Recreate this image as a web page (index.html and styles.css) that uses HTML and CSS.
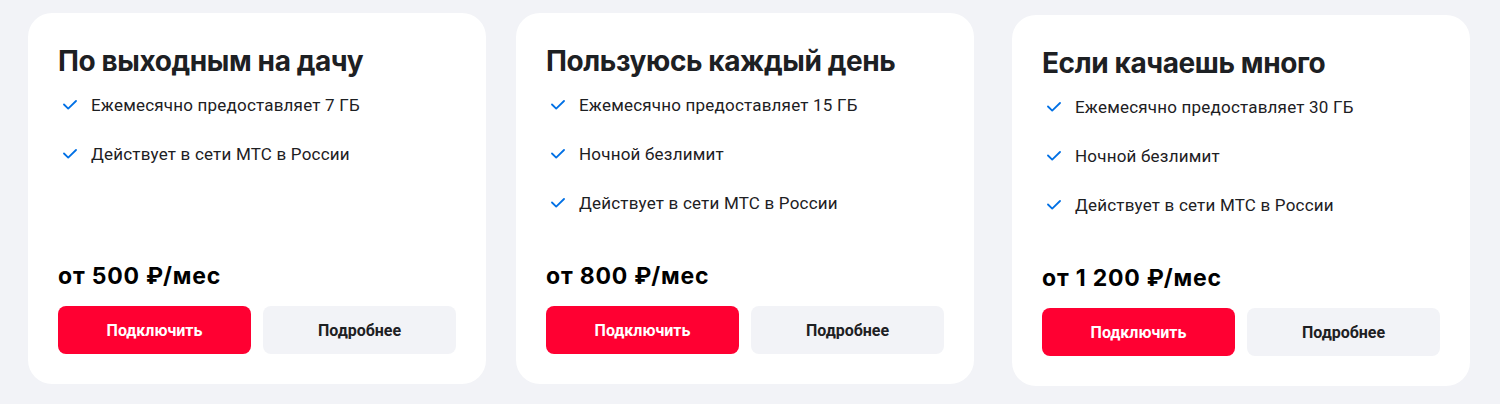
FILE: index.html
```html
<!DOCTYPE html>
<html lang="ru">
<head>
<meta charset="utf-8">
<title>Тарифы</title>
<link rel="stylesheet" href="styles.css">
</head>
<body>
<div class="cards">
  <div class="card">
    <h2 class="card-title">По выходным на дачу</h2>
    <ul class="features">
      <li><span class="check"><svg viewBox="0 0 14 10" width="14" height="10"><polyline points="1,4.5 5.2,8.6 13,1" /></svg></span>Ежемесячно предоставляет 7 ГБ</li>
      <li><span class="check"><svg viewBox="0 0 14 10" width="14" height="10"><polyline points="1,4.5 5.2,8.6 13,1" /></svg></span>Действует в сети МТС в России</li>
    </ul>
    <div class="bottom">
      <div class="price">от 500 ₽/мес</div>
      <div class="buttons">
        <button class="btn btn-red">Подключить</button>
        <button class="btn btn-gray">Подробнее</button>
      </div>
    </div>
  </div>
  <div class="card">
    <h2 class="card-title">Пользуюсь каждый день</h2>
    <ul class="features">
      <li><span class="check"><svg viewBox="0 0 14 10" width="14" height="10"><polyline points="1,4.5 5.2,8.6 13,1" /></svg></span>Ежемесячно предоставляет 15 ГБ</li>
      <li><span class="check"><svg viewBox="0 0 14 10" width="14" height="10"><polyline points="1,4.5 5.2,8.6 13,1" /></svg></span>Ночной безлимит</li>
      <li><span class="check"><svg viewBox="0 0 14 10" width="14" height="10"><polyline points="1,4.5 5.2,8.6 13,1" /></svg></span>Действует в сети МТС в России</li>
    </ul>
    <div class="bottom">
      <div class="price">от 800 ₽/мес</div>
      <div class="buttons">
        <button class="btn btn-red">Подключить</button>
        <button class="btn btn-gray">Подробнее</button>
      </div>
    </div>
  </div>
  <div class="card card-shifted">
    <h2 class="card-title">Если качаешь много</h2>
    <ul class="features">
      <li><span class="check"><svg viewBox="0 0 14 10" width="14" height="10"><polyline points="1,4.5 5.2,8.6 13,1" /></svg></span>Ежемесячно предоставляет 30 ГБ</li>
      <li><span class="check"><svg viewBox="0 0 14 10" width="14" height="10"><polyline points="1,4.5 5.2,8.6 13,1" /></svg></span>Ночной безлимит</li>
      <li><span class="check"><svg viewBox="0 0 14 10" width="14" height="10"><polyline points="1,4.5 5.2,8.6 13,1" /></svg></span>Действует в сети МТС в России</li>
    </ul>
    <div class="bottom">
      <div class="price">от 1 200 ₽/мес</div>
      <div class="buttons">
        <button class="btn btn-red">Подключить</button>
        <button class="btn btn-gray">Подробнее</button>
      </div>
    </div>
  </div>
</div>
</body>
</html>
```

FILE: styles.css
```css
* { box-sizing: border-box; }
html, body {
  margin: 0;
  padding: 0;
  background: #f2f3f7;
  height: 100%;
}
body {
  font-family: Roboto, "Noto Sans", sans-serif;
  color: #1d2023;
}
.cards {
  display: flex;
  align-items: flex-start;
  gap: 30px;
  padding: 13px 0 0 28px;
}
.card {
  width: 458px;
  height: 371px;
  flex: none;
  background: #ffffff;
  border-radius: 24px;
  padding: 30px 30px 30px 30px;
  display: flex;
  flex-direction: column;
}
.card-shifted {
  margin-left: 8px;
  margin-top: 2px;
}
.card-title {
  margin: 0;
  font-family: Inter, "Noto Sans", sans-serif;
  font-weight: 700;
  font-size: 28px;
  line-height: 36px;
  letter-spacing: -0.4px;
  color: #1d2023;
}
.features {
  list-style: none;
  margin: 14px 0 0 0;
  padding: 0;
  display: flex;
  flex-direction: column;
  gap: 25px;
}
.features li {
  display: flex;
  align-items: center;
  gap: 9px;
  font-size: 17px;
  line-height: 24px;
  letter-spacing: 0.2px;
}
.check {
  width: 24px;
  height: 24px;
  flex: none;
  display: flex;
  align-items: center;
  justify-content: center;
}
.check svg polyline {
  fill: none;
  stroke: #0070e5;
  stroke-width: 1.8;
  stroke-linecap: round;
  stroke-linejoin: round;
}
.bottom {
  margin-top: auto;
}
.price {
  font-family: Inter, "Noto Sans", sans-serif;
  font-weight: 700;
  font-size: 23px;
  line-height: 28px;
  letter-spacing: 0.8px;
  margin-bottom: 16px;
  color: #000000;
}
.buttons {
  display: flex;
  gap: 12px;
}
.btn {
  flex: 1;
  height: 48px;
  border: none;
  border-radius: 8px;
  font-family: Roboto, "Noto Sans", sans-serif;
  font-weight: 700;
  font-size: 16px;
  cursor: pointer;
}
.btn-red {
  background: #ff0032;
  color: #ffffff;
}
.btn-gray {
  background: #f2f3f7;
  color: #1d2023;
}
```
